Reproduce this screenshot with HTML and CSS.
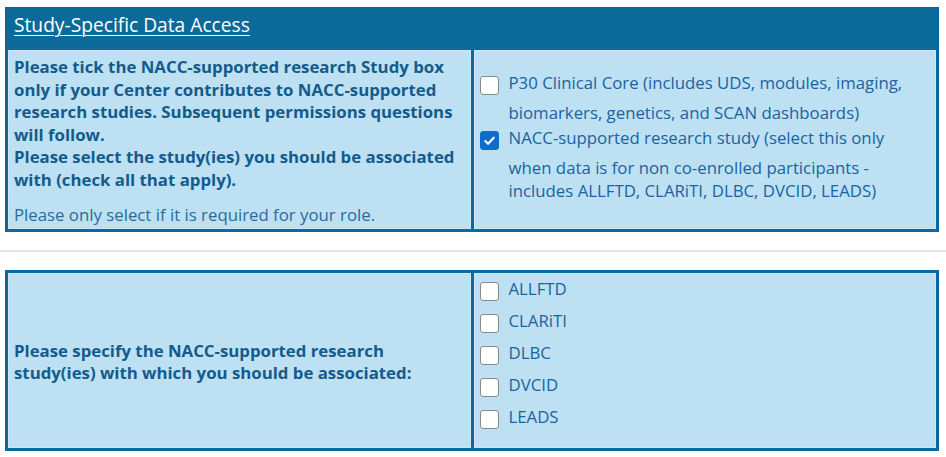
FILE: index.html
```html
<!DOCTYPE html>
<html lang="en">
<head>
  <meta charset="UTF-8" />
  <meta name="viewport" content="width=device-width, initial-scale=1.0" />
  <title>Study-Specific Data Access</title>
  <link rel="stylesheet" href="styles.css">
</head>
<body>
  <div class="panel panel-top">
    <h2 class="panel-title"><a href="#">Study-Specific Data Access</a></h2>
    <div class="row">
      <div class="cell cell-question">
        <p class="strong">Please tick the NACC-supported research Study box<br>
        only if your Center contributes to NACC-supported<br>
        research studies. Subsequent permissions questions<br>
        will follow.<br>
        Please select the study(ies) you should be associated<br>
        with (check all that apply).</p>
        <p class="note">Please only select if it is required for your role.</p>
      </div>
      <div class="cell cell-options">
        <label class="opt">
          <input type="checkbox" />
          <span class="opt-text">
            <span class="first">P30 Clinical Core (includes UDS, modules, imaging,</span>
            <span>biomarkers, genetics, and SCAN dashboards)</span>
          </span>
        </label>
        <label class="opt">
          <input type="checkbox" checked />
          <span class="opt-text">
            <span class="first">NACC-supported research study (select this only</span>
            <span>when data is for non co-enrolled participants -</span>
            <span>includes ALLFTD, CLARiTI, DLBC, DVCID, LEADS)</span>
          </span>
        </label>
      </div>
    </div>
  </div>

  <hr class="divider" />

  <div class="panel panel-bottom">
    <div class="row">
      <div class="cell cell-question centered">
        <p class="strong">Please specify the NACC-supported research<br>
        study(ies) with which you should be associated:</p>
      </div>
      <div class="cell cell-list">
        <label class="opt"><input type="checkbox" /><span class="opt-text">ALLFTD</span></label>
        <label class="opt"><input type="checkbox" /><span class="opt-text">CLARiTI</span></label>
        <label class="opt"><input type="checkbox" /><span class="opt-text">DLBC</span></label>
        <label class="opt"><input type="checkbox" /><span class="opt-text">DVCID</span></label>
        <label class="opt"><input type="checkbox" /><span class="opt-text">LEADS</span></label>
      </div>
    </div>
  </div>
</body>
</html>
```

FILE: styles.css
```css
body {
  margin: 0;
  padding-top: 7px;
  font-family: 'Open Sans', 'Liberation Sans', sans-serif;
  font-size: 16.8px;
  color: #175d8c;
  background: #ffffff;
}
.panel {
  margin: 0 7px 0 5px;
  background: #0b6a9a;
  padding: 0 3px 3px;
}
.panel-bottom {
  padding-top: 3px;
}
.panel-title {
  margin: 0;
  height: 43px;
  box-sizing: border-box;
  padding: 5px 0 0 6px;
  font-size: 19.2px;
  font-weight: 400;
  line-height: 26px;
}
.panel-title a {
  color: #ffffff;
  text-decoration: underline;
  text-decoration-thickness: 1px;
  text-underline-offset: 3px;
}
.row {
  display: grid;
  grid-template-columns: 1fr 1fr;
  gap: 3px;
}
.cell {
  background: #bde0f3;
  box-shadow: inset 0 0 0 1px #cde8f6;
}
.cell-question {
  padding: 6px 6px 3px;
}
.cell-question.centered {
  display: flex;
  align-items: center;
  height: 175px;
  box-sizing: border-box;
}
.strong {
  margin: 0;
  font-weight: 700;
  line-height: 22.6px;
  color: #135b8b;
}
.note {
  margin: 12px 0 0;
  line-height: 22.6px;
  color: #2b6b98;
}
.cell-options {
  padding: 21px 6px 0;
}
.cell-list {
  padding: 4px 6px 0;
}
.opt {
  display: flex;
  align-items: flex-start;
  gap: 10px;
  line-height: 23px;
  color: #1a63a0;
  margin-bottom: 2px;
}
.cell-list .opt {
  margin-bottom: 8px;
}
.opt-text span {
  display: block;
}
.opt-text .first {
  margin-bottom: 7px;
}
.opt input {
  appearance: none;
  -webkit-appearance: none;
  flex: none;
  width: 19px;
  height: 19px;
  margin: 5px 0 0;
  box-sizing: border-box;
  border: 1.5px solid #8a8a8a;
  border-radius: 3px;
  background: #ffffff;
}
.opt input:checked {
  border-color: #0f6bcc;
  background: #0f6bcc url("data:image/svg+xml,%3Csvg xmlns='http://www.w3.org/2000/svg' viewBox='0 0 16 16'%3E%3Cpath d='M3.5 8.5l3 3 6-6.5' fill='none' stroke='white' stroke-width='2.2' stroke-linecap='round' stroke-linejoin='round'/%3E%3C/svg%3E") center / 15px no-repeat;
}
.divider {
  margin: 18px 0;
  border: 0;
  height: 2px;
  background: #e4e4e4;
}
```
